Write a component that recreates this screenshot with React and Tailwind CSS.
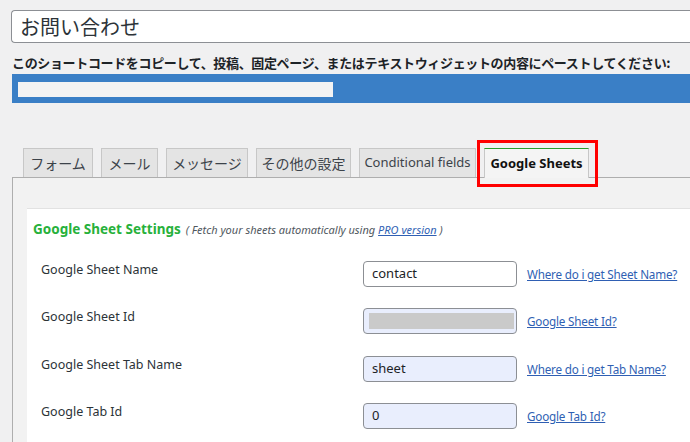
const jp = { fontFamily: '"Noto Sans CJK JP", "Noto Sans", sans-serif' }
const ui = { fontFamily: '"Noto Sans", "Noto Sans CJK JP", sans-serif' }

const tabs = [
  { label: "フォーム", w: "w-[70px]" },
  { label: "メール", w: "w-[57px]" },
  { label: "メッセージ", w: "w-[82px]" },
  { label: "その他の設定", w: "w-[95px]" },
  { label: "Conditional fields", w: "w-[117px]" },
]

const rows = [
  { label: "Google Sheet Name", value: "contact", link: "Where do i get Sheet Name?", filled: false, h: "h-[47px]" },
  { label: "Google Sheet Id", value: null, link: "Google Sheet Id?", filled: true, h: "h-[48px]" },
  { label: "Google Sheet Tab Name", value: "sheet", link: "Where do i get Tab Name?", filled: true, h: "h-[47px]" },
  { label: "Google Tab Id", value: "0", link: "Google Tab Id?", filled: true, h: "h-[47px]" },
]

const App = () => {
  return (
    <div className="w-[690px] h-[442px] overflow-hidden bg-[#f0f0f1] pl-[12px] pt-[10px]" style={ui}>
      {/* title */}
      <div
        className="h-[33px] -ml-[1px] bg-white border border-r-0 border-[#8c8f94] rounded-l-[4px] flex items-center pl-[8px] text-[20px] text-[#2c3338]"
        style={jp}
      >
        お問い合わせ
      </div>

      {/* shortcode */}
      <p className="mt-[11px] text-[13px] font-bold leading-[18px] text-[#1d2327] tracking-[-0.35px] whitespace-nowrap" style={jp}>
        このショートコードをコピーして、投稿、固定ページ、またはテキストウィジェットの内容にペーストしてください:
      </p>
      <div className="mt-[2px] h-[29px] bg-[#3a7fc6] pl-[6px] pt-[8px]">
        <div className="w-[315px] h-[15px] bg-[#f3f3f3]"></div>
      </div>

      {/* tabs */}
      <div className="mt-[45px] flex gap-[8px] pl-[11px] relative z-10">
        {tabs.map((t) => (
          <div
            key={t.label}
            className={`${t.w} h-[29px] bg-[#e4e4e4] border border-b-0 border-[#c7c7c7] flex items-center justify-center text-[14px] text-[#3c434a] whitespace-nowrap`}
            style={t.label === "Conditional fields" ? { ...ui, fontSize: "13px" } : jp}
          >
            {t.label}
          </div>
        ))}
        <div className="relative w-[105px] h-[30px] bg-[#f4f4f4] border border-b-0 border-[#c7c7c7] border-t-[#2a9d2a] flex items-center justify-center text-[13px] font-bold text-[#111] whitespace-nowrap">
          Google Sheets
          <div className="absolute -left-[8px] -top-[9px] w-[121px] h-[47px] border-[3px] border-[#ff0000]"></div>
        </div>
      </div>

      {/* panel */}
      <div className="-mt-[1px] border-t border-l border-[#aeaeae] bg-[#f2f2f2] pt-[30px] pl-[14px] h-[300px]">
        <div className="bg-white border-t border-[#e2e2e2] h-full pl-[6px] pt-[10px]">
          <div className="flex items-baseline gap-[5px] leading-[20px] whitespace-nowrap">
            <span className="text-[13.5px] font-bold text-[#27b13b]">Google Sheet Settings</span>
            <span className="text-[11px] italic text-[#50575e]">
              ( Fetch your sheets automatically using <span className="text-[#2f5fb3] underline">PRO version</span> )
            </span>
          </div>

          <div className="mt-[21px] pl-[8px]">
            {rows.map((r) => (
              <div key={r.label} className={`flex ${r.h}`}>
                <div className="w-[322px] shrink-0 text-[12.5px] leading-[18px] text-[#2c3338] whitespace-nowrap">{r.label}</div>
                <div className="flex items-center h-[26px] shrink-0">
                  <div
                    className={`w-[154px] h-[26px] shrink-0 rounded-[4px] border border-[#8c8f94] flex items-center pl-[8px] text-[13px] text-[#1d2327] ${
                      r.filled ? "bg-[#e9eefd]" : "bg-white"
                    }`}
                  >
                    {r.value !== null ? r.value : <div className="-ml-[3px] w-[145px] h-[16px] bg-[#cacaca]"></div>}
                  </div>
                  <a className="ml-[10px] mt-[2px] text-[11.7px] tracking-[-0.2px] text-[#2f5fb3] underline whitespace-nowrap">{r.link}</a>
                </div>
              </div>
            ))}
          </div>
        </div>
      </div>
    </div>
  )
}

export default App
